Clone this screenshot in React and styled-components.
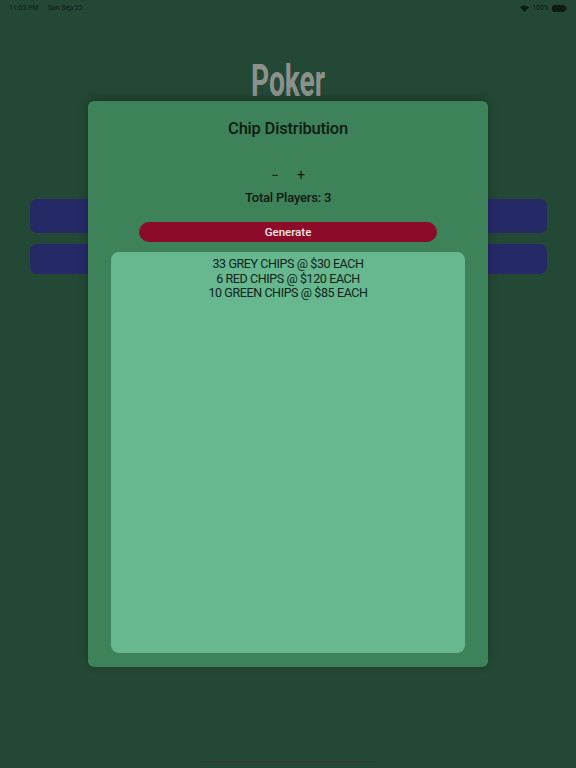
import React from 'react';
import styled, { createGlobalStyle } from 'styled-components';

const colors = {
  page: '#234835',
  modal: '#3e8259',
  inner: '#67b78f',
  blue: '#252966',
  red: '#8b0b28',
  ink: '#111a14',
  dimText: '#8c918c',
};

const GlobalStyle = createGlobalStyle`
  html, body {
    margin: 0;
    padding: 0;
    background: ${colors.page};
  }
  body {
    font-family: Roboto, "Liberation Sans", sans-serif;
  }
`;

// page and status bar
const Page = styled.div`
  position: relative;
  width: 576px;
  height: 768px;
  overflow: hidden;
  background: ${colors.page};
  display: flex;
  flex-direction: column;
`;
const StatusBar = styled.div`
  height: 16px;
  padding: 0 9px;
  display: flex;
  align-items: center;
  justify-content: space-between;
  font-size: 7px;
  color: #0f1a14;
`;
const StatusGroup = styled.div`
  display: flex;
  align-items: center;
  gap: ${p => p.gap || 4}px;
`;
const Title = styled.h1`
  margin: 43px 0 0;
  text-align: center;
  font-size: 44px;
  line-height: 44px;
  font-weight: 700;
  color: ${colors.dimText};
  transform: scaleX(0.64);
`;
const MenuList = styled.div`
  margin-top: 96px;
  padding: 0 29px 0 30px;
  display: flex;
  flex-direction: column;
  gap: 11px;
`;
const MenuBar = styled.div`
  height: ${p => p.h}px;
  border-radius: 7px;
  background: ${colors.blue};
`;

// modal
const Modal = styled.div`
  position: absolute;
  left: 88px;
  top: 101px;
  width: 400px;
  height: 566px;
  border-radius: 6px;
  background: ${colors.modal};
  box-shadow: 0 -2px 10px rgba(0, 0, 0, 0.25);
  display: flex;
  flex-direction: column;
  align-items: center;
  box-sizing: border-box;
  padding: 18px 23px 14px;
  color: ${colors.ink};
`;
const ModalTitle = styled.div`
  font-size: 16.5px;
  line-height: 20px;
  font-weight: 500;
  letter-spacing: -0.2px;
`;
const Stepper = styled.div`
  margin-top: 28px;
  display: flex;
  gap: 14px;
  font-size: 14px;
  line-height: 16px;
`;
const StepButton = styled.span`
  width: 12px;
  text-align: center;
`;
const Players = styled.div`
  margin-top: 6px;
  font-size: 13px;
  line-height: 18px;
  font-weight: 500;
  letter-spacing: -0.2px;
`;
const GenerateButton = styled.button`
  margin-top: 15px;
  width: 298px;
  height: 20px;
  border: none;
  border-radius: 10px;
  background: ${colors.red};
  color: #f1e8ea;
  font-family: inherit;
  font-size: 11.5px;
  font-weight: 500;
  padding: 0;
`;
const ResultBox = styled.div`
  margin-top: 10px;
  align-self: stretch;
  flex: 1;
  border-radius: 8px;
  background: ${colors.inner};
  padding-top: 5px;
  text-align: center;
  font-size: 12.5px;
  line-height: 14.5px;
  letter-spacing: -0.4px;
  text-transform: uppercase;
  color: #10241a;
`;
const HomeIndicator = styled.div`
  position: absolute;
  left: 200px;
  bottom: 5px;
  width: 176px;
  height: 2px;
  border-radius: 1px;
  background: #2e3d35;
`;

function Wifi() {
  return (
    <svg width="9" height="7" viewBox="0 0 12 9">
      <path d="M6 9 L0 2.8 A8.6 8.6 0 0 1 12 2.8 Z" fill="#0f1a14" />
    </svg>
  );
}

function Battery() {
  return (
    <svg width="15" height="7" viewBox="0 0 15 7">
      <rect x="0.5" y="0.5" width="12.5" height="6" rx="1.5" fill="#0f1a14" stroke="#0f1a14" />
      <rect x="13.5" y="2.3" width="1.2" height="2.4" rx="0.5" fill="#0f1a14" />
    </svg>
  );
}

const results = ['33 Grey Chips @ $30 each', '6 Red Chips @ $120 each', '10 Green Chips @ $85 each'];

export default function App() {
  return (
    <>
      <GlobalStyle />
      <Page>
        <StatusBar>
          <StatusGroup gap={9}>
            <span>11:03 PM</span>
            <span>Sun Sep 22</span>
          </StatusGroup>
          <StatusGroup gap={3}>
            <Wifi />
            <span>100%</span>
            <Battery />
          </StatusGroup>
        </StatusBar>
        <Title>Poker</Title>
        <MenuList>
          <MenuBar h={34} />
          <MenuBar h={30} />
        </MenuList>

        <Modal>
          <ModalTitle>Chip Distribution</ModalTitle>
          <Stepper>
            <StepButton>−</StepButton>
            <StepButton>+</StepButton>
          </Stepper>
          <Players>Total Players: 3</Players>
          <GenerateButton>Generate</GenerateButton>
          <ResultBox>
            {results.map(r => (
              <div key={r}>{r}</div>
            ))}
          </ResultBox>
        </Modal>
        <HomeIndicator />
      </Page>
    </>
  );
}
